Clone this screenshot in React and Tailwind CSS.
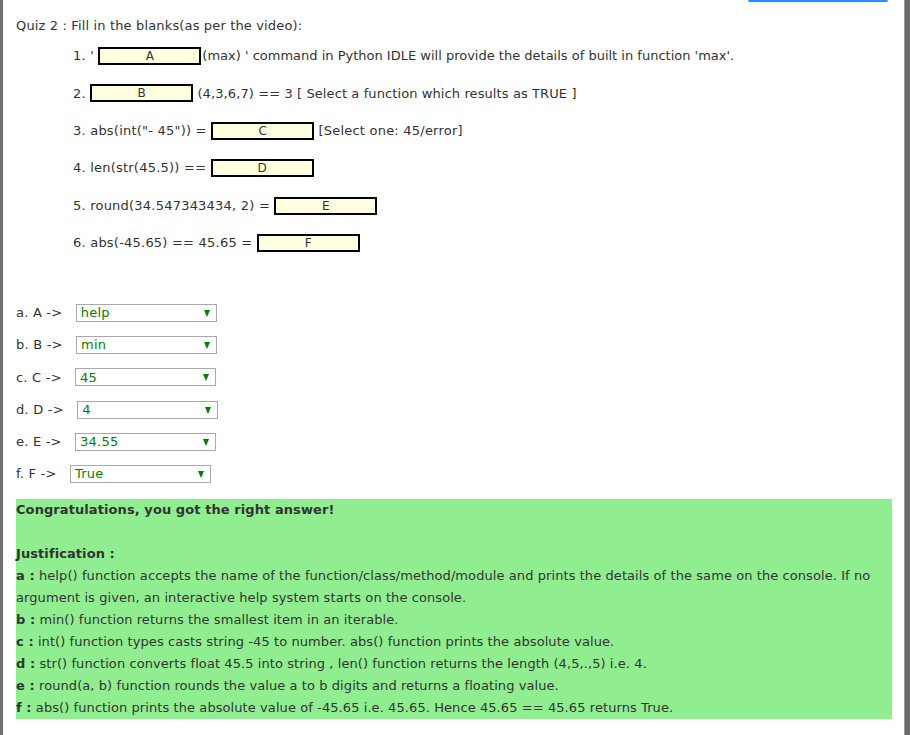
import React from "react";

const Blank = ({ letter }) => (
  <span className="inline-flex h-[18px] w-[103px] items-center justify-center border-2 border-black bg-[#ffffe0] text-[12px] leading-none tracking-normal text-[#333]">
    {letter}
  </span>
);

const Sel = ({ label, value }) => (
  <div className="flex h-[18px] items-center tracking-[0.22px]">
    <span className="whitespace-pre">{label} </span>
    <div className="relative ml-[9px] flex h-[18px] w-[141px] items-center border border-[#a9a9a9] pl-[4px] text-[13px] text-[#008000]">
      {value}
      <span className="absolute right-[6px] top-[5px] h-0 w-0 border-x-[3.5px] border-t-[7px] border-x-transparent border-t-[#008000]"></span>
    </div>
  </div>
);

export default function App() {
  const items = [
    <>
      <span className="whitespace-pre tracking-[0.22px]">1. ' </span>
      <Blank letter="A" />
      <span className="ml-[1px] tracking-normal">(max) ' command in Python IDLE will provide the details of built in function 'max'.</span>
    </>,
    <>
      <span className="whitespace-pre tracking-[0.22px]">2. </span>
      <Blank letter="B" />
      <span className="whitespace-pre tracking-[0.1px]"> (4,3,6,7) == 3 [ Select a function which results as TRUE ]</span>
    </>,
    <>
      <span className="whitespace-pre tracking-[0.22px]">3. abs(int("- 45")) = </span>
      <Blank letter="C" />
      <span className="whitespace-pre tracking-[0.22px]"> [Select one: 45/error]</span>
    </>,
    <>
      <span className="whitespace-pre tracking-[0.22px]">4. len(str(45.5)) == </span>
      <Blank letter="D" />
    </>,
    <>
      <span className="whitespace-pre tracking-[0.22px]">5. round(34.547343434, 2) = </span>
      <Blank letter="E" />
    </>,
    <>
      <span className="whitespace-pre tracking-[0.22px]">6. abs(-45.65) == 45.65 = </span>
      <Blank letter="F" />
    </>,
  ];
  const sels = [
    ["a. A ->", "help"],
    ["b. B ->", "min"],
    ["c. C ->", "45"],
    ["d. D ->", "4"],
    ["e. E ->", "34.55"],
    ["f. F ->", "True"],
  ];
  return (
    <div className="flex h-[735px] w-[910px] overflow-hidden bg-white font-['DejaVu_Sans',sans-serif] text-[13px] text-[#333]">
      <div className="w-[3px] shrink-0 bg-[#707070]"></div>
      <div className="flex min-w-0 flex-1 flex-col pl-[13px] pr-[12px]">
        <div className="flex h-[2px] justify-end">
          <div className="mr-[4px] h-[2px] w-[140px] rounded-b-[3px] bg-[#1e90ff]"></div>
        </div>
        <div className="mt-[15px] flex h-[18px] items-center tracking-[0.15px]">Quiz 2 : Fill in the blanks(as per the video):</div>
        <div className="mt-[12px] flex flex-col gap-[19.4px] pl-[57px]">
          {items.map((it, i) => (
            <div key={i} className="flex h-[18px] items-center whitespace-nowrap">
              {it}
            </div>
          ))}
        </div>
        <div className="mt-[52px] flex flex-col gap-[14.2px]">
          {sels.map(([l, v]) => (
            <Sel key={l} label={l} value={v} />
          ))}
        </div>
        <div className="mt-[16px] bg-[#90ee90] text-[13px] leading-[22px] tracking-[0.08px]">
          <div className="font-bold">Congratulations, you got the right answer!</div>
          <div className="h-[22px]"></div>
          <div className="font-bold">Justification :</div>
          <div>
            <b>a :</b> help() function accepts the name of the function/class/method/module and prints the details of the same on the console. If no argument is given, an interactive help system starts on the console.
          </div>
          <div><b>b :</b> min() function returns the smallest item in an iterable.</div>
          <div><b>c :</b> int() function types casts string -45 to number. abs() function prints the absolute value.</div>
          <div><b>d :</b> str() function converts float 45.5 into string , len() function returns the length (4,5,.,5) i.e. 4.</div>
          <div><b>e :</b> round(a, b) function rounds the value a to b digits and returns a floating value.</div>
          <div><b>f :</b> abs() function prints the absolute value of -45.65 i.e. 45.65. Hence 45.65 == 45.65 returns True.</div>
        </div>
      </div>
      <div className="w-[6px] shrink-0 border-l border-[#9a9a9a] bg-[#6b6b6b]"></div>
    </div>
  );
}
